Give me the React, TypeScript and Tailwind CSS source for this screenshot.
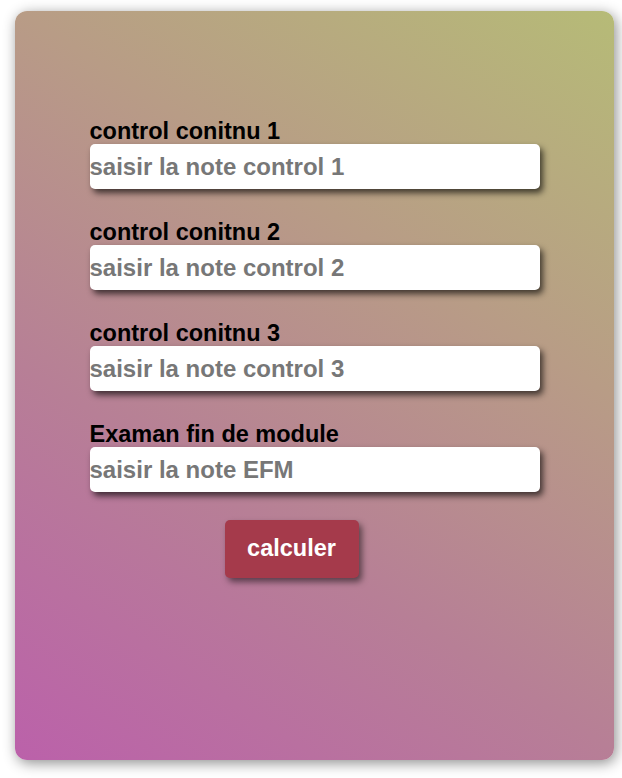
const fields = [
  { label: "control conitnu 1", placeholder: "saisir la note control 1" },
  { label: "control conitnu 2", placeholder: "saisir la note control 2" },
  { label: "control conitnu 3", placeholder: "saisir la note control 3" },
  { label: "Examan fin de module", placeholder: "saisir la note EFM" },
];

export default function App() {
  return (
    <div className="min-h-screen bg-white pl-[15px] pt-[11px] font-['Liberation_Sans',Arial,sans-serif]">
      <div className="flex h-[749px] w-[599px] flex-col items-center rounded-[12px] bg-[linear-gradient(33deg,#bb61aa_0%,#b77f96_35%,#b89c86_66%,#b6bb77_100%)] pt-[109px] shadow-[2px_3px_14px_rgba(0,0,0,0.45)]">
        <form className="flex w-[450px] flex-col gap-[32px]">
          {fields.map((f) => (
            <div key={f.label} className="flex flex-col">
              <label className="text-[23.5px] leading-[22px] mb-[2px] font-bold text-black">{f.label}</label>
              <input
                type="text"
                placeholder={f.placeholder}
                className="h-[45px] w-full rounded-[5px] bg-white px-0 text-[24px] font-bold text-black shadow-[3px_4px_6px_rgba(0,0,0,0.65)] outline-none placeholder:text-[#777]"
              />
            </div>
          ))}
          <button
            type="button"
            className="-mt-[4px] ml-[135px] h-[58px] w-[134px] rounded-[5px] bg-[#a53a4b] text-[23.5px] font-bold text-white shadow-[3px_4px_6px_rgba(0,0,0,0.5)]"
          >
            calculer
          </button>
        </form>
      </div>
    </div>
  );
}
